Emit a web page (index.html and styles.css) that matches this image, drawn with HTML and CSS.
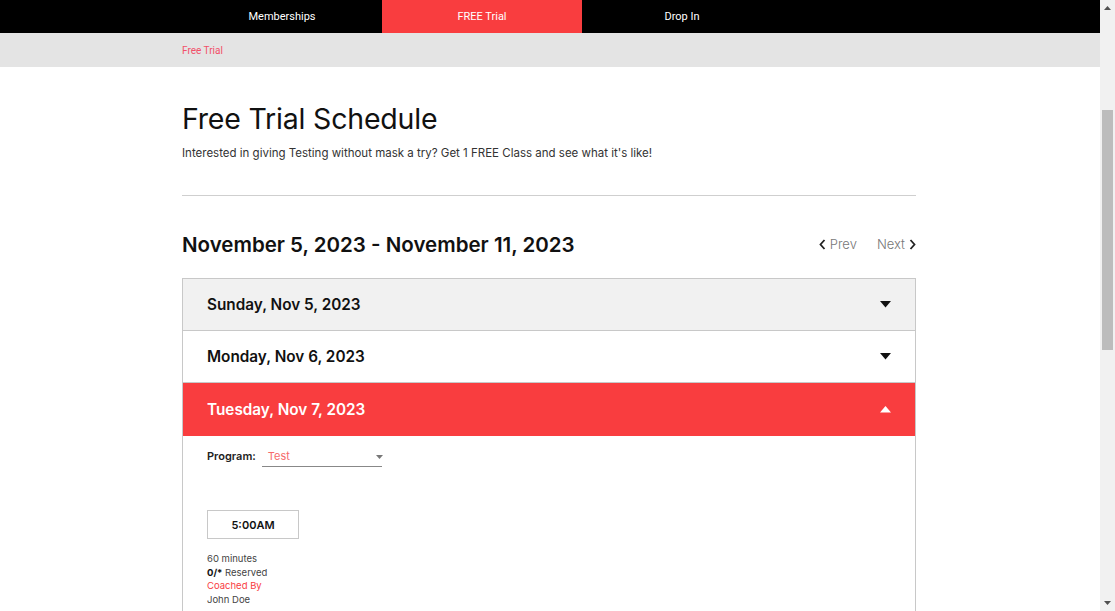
FILE: index.html
```html
<!DOCTYPE html>
<html lang="en">
<head>
<meta charset="utf-8">
<title>Free Trial Schedule</title>
<link rel="stylesheet" href="styles.css">
</head>
<body>
<div class="page">
<nav class="topnav">
  <div class="wrap navrow">
    <a class="navitem">Memberships</a>
    <a class="navitem active">FREE Trial</a>
    <a class="navitem">Drop In</a>
  </div>
</nav>
<div class="crumbbar">
  <div class="wrap crumb">Free Trial</div>
</div>
<main class="wrap main">
  <h1 class="title">Free Trial Schedule</h1>
  <p class="lead">Interested in giving Testing without mask a try? Get 1 FREE Class and see what it's like!</p>
  <hr class="rule">
  <div class="weekbar">
    <h2 class="week">November 5, 2023 - November 11, 2023</h2>
    <div class="pager">
      <a class="pg"><svg class="chev" width="7" height="11" viewBox="0 0 7 11"><path d="M5.5 1 L1.5 5.5 L5.5 10" fill="none" stroke="#222" stroke-width="1.8"/></svg>Prev</a>
      <a class="pg">Next<svg class="chev" width="7" height="11" viewBox="0 0 7 11"><path d="M1.5 1 L5.5 5.5 L1.5 10" fill="none" stroke="#222" stroke-width="1.8"/></svg></a>
    </div>
  </div>
  <div class="accordion">
    <div class="day day-gray"><span>Sunday, Nov 5, 2023</span><svg width="11" height="7" viewBox="0 0 11 7"><polygon points="0,0 11,0 5.5,6.5" fill="#111"/></svg></div>
    <div class="day"><span>Monday, Nov 6, 2023</span><svg width="11" height="7" viewBox="0 0 11 7"><polygon points="0,0 11,0 5.5,6.5" fill="#111"/></svg></div>
    <div class="day day-open"><span>Tuesday, Nov 7, 2023</span><svg width="11" height="7" viewBox="0 0 11 7"><polygon points="0,6.5 11,6.5 5.5,0" fill="#fff"/></svg></div>
    <div class="panel">
      <div class="program">
        <span class="plabel">Program:</span>
        <div class="select"><span>Test</span><svg width="7" height="4" viewBox="0 0 7 4"><polygon points="0,0 7,0 3.5,4" fill="#777"/></svg></div>
      </div>
      <div class="slot">5:00AM</div>
      <div class="meta">
        <div>60 minutes</div>
        <div><b>0/*</b> Reserved</div>
        <div class="coach">Coached By</div>
        <div>John Doe</div>
      </div>
    </div>
    <div class="day day-top"><span>Wednesday, Nov 8, 2023</span><svg width="11" height="7" viewBox="0 0 11 7"><polygon points="0,0 11,0 5.5,6.5" fill="#111"/></svg></div>
    <div class="day"><span>Thursday, Nov 9, 2023</span><svg width="11" height="7" viewBox="0 0 11 7"><polygon points="0,0 11,0 5.5,6.5" fill="#111"/></svg></div>
    <div class="day"><span>Friday, Nov 10, 2023</span><svg width="11" height="7" viewBox="0 0 11 7"><polygon points="0,0 11,0 5.5,6.5" fill="#111"/></svg></div>
    <div class="day"><span>Saturday, Nov 11, 2023</span><svg width="11" height="7" viewBox="0 0 11 7"><polygon points="0,0 11,0 5.5,6.5" fill="#111"/></svg></div>
  </div>
</main>
</div>
<div class="scrollbar">
  <svg class="sarrow" width="15" height="17" viewBox="0 0 15 17"><polygon points="4,10 11,10 7.5,6" fill="#505050"/></svg>
  <div class="strack"><div class="sthumb"></div></div>
  <svg class="sarrow" width="15" height="17" viewBox="0 0 15 17"><polygon points="4,7 11,7 7.5,11" fill="#505050"/></svg>
</div>
</body>
</html>
```
FILE: styles.css
```css
html, body {
  margin: 0;
  padding: 0;
  background: #fff;
}
body {
  font-family: Inter, "Noto Sans", sans-serif;
  color: #111;
}
.page {
  margin-right: 15px;
  padding-bottom: 520px;
}
.wrap {
  width: 734px;
  margin: 0 auto;
  padding-right: 2px;
}
.topnav {
  background: #000;
  height: 33px;
}
.navrow {
  display: flex;
  height: 33px;
}
.navitem {
  width: 200px;
  text-align: center;
  line-height: 33px;
  color: #fff;
  font-family: Roboto, "Liberation Sans", sans-serif;
  font-size: 11px;
}
.navitem.active {
  background: #f93d3f;
}
.crumbbar {
  background: #e4e4e4;
  height: 34px;
}
.crumb {
  line-height: 35px;
  font-family: Roboto, "Liberation Sans", sans-serif;
  font-size: 10px;
  color: #f2506a;
}
.main {
  padding-top: 34px;
  padding-bottom: 60px;
}
.title {
  margin: 0;
  font-size: 28.5px;
  line-height: 36px;
  font-weight: 400;
  letter-spacing: -0.2px;
}
.lead {
  margin: 7px 0 0;
  font-size: 11.5px;
  line-height: 18px;
  color: #333;
}
.rule {
  margin: 33px 0 0;
  border: 0;
  border-top: 1px solid #cfcfcf;
  height: 0;
}
.weekbar {
  display: flex;
  justify-content: space-between;
  align-items: center;
  margin-top: 35px;
}
.week {
  margin: 0;
  font-size: 20.5px;
  line-height: 28px;
  font-weight: 600;
}
.pager {
  display: flex;
  gap: 20px;
  font-size: 13px;
  color: #777;
  font-weight: 300;
  padding-bottom: 2px;
}
.pg {
  display: flex;
  align-items: center;
  gap: 4px;
}
.accordion {
  margin-top: 19px;
  border: 1px solid #c8c8c8;
  border-bottom: 0;
}
.day {
  height: 51px;
  border-bottom: 1px solid #c8c8c8;
  display: flex;
  align-items: center;
  justify-content: space-between;
  padding: 0 24px;
  font-size: 15.3px;
  font-weight: 600;
  background: #fff;
}
.day-gray {
  background: #f1f1f1;
}
.day-open {
  background: #f93d3f;
  color: #fff;
  border-bottom-color: #f93d3f;
  height: 52px;
}
.day-top {
  border-top: 1px solid #c8c8c8;
}
.panel {
  padding: 14px 24px 30px;
}
.program {
  display: flex;
  align-items: flex-end;
  gap: 6px;
  height: 17px;
}
.plabel {
  font-size: 11px;
  font-weight: 600;
  color: #222;
  line-height: 15px;
  padding-bottom: 3px;
}
.select {
  width: 120px;
  height: 17px;
  border-bottom: 1px solid #888;
  display: flex;
  justify-content: space-between;
  align-items: center;
  box-sizing: border-box;
  padding: 0 0 3px 6px;
  font-size: 11px;
  color: #f66b6b;
  line-height: 13px;
}
.select svg {
  margin-right: -1px;
}
.slot {
  margin-top: 43px;
  width: 92px;
  height: 29px;
  box-sizing: border-box;
  border: 1px solid #c8c8c8;
  display: flex;
  align-items: center;
  justify-content: center;
  font-size: 11px;
  font-weight: 600;
  color: #111;
}
.meta {
  margin-top: 13px;
  font-size: 9.5px;
  line-height: 13.5px;
  color: #444;
}
.meta b {
  color: #111;
  font-weight: 700;
}
.coach {
  color: #f93d3f;
}
.scrollbar {
  position: fixed;
  top: 0;
  right: 0;
  width: 15px;
  height: 100vh;
  background: #f1f1f1;
  display: flex;
  flex-direction: column;
}
.sarrow {
  flex: none;
  display: block;
}
.strack {
  flex: 1;
  padding-top: 93px;
}
.sthumb {
  margin: 0 2px;
  height: 240px;
  background: #bcbcbc;
}
```
